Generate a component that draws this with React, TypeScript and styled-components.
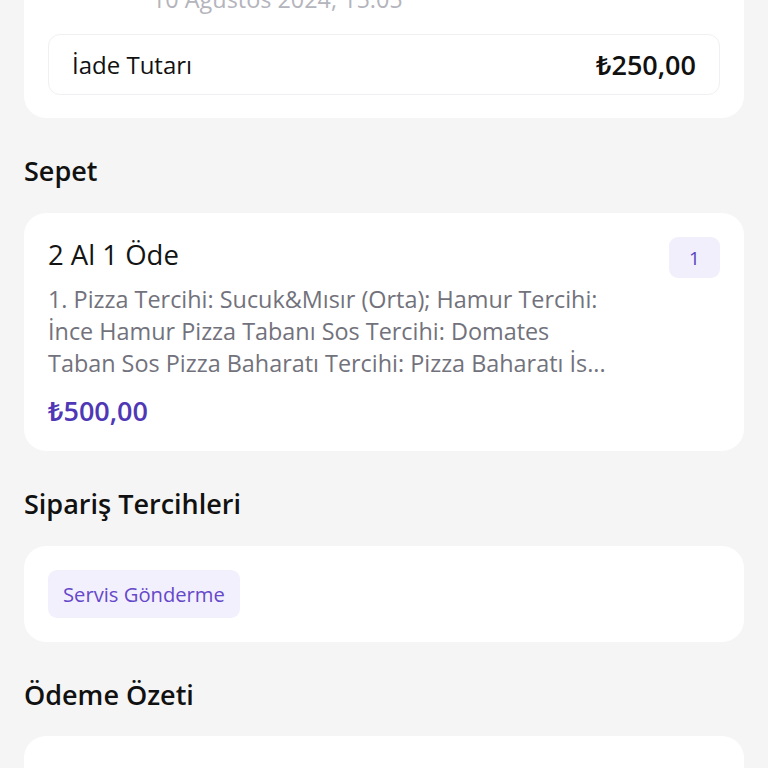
import React from "react";
import styled, { createGlobalStyle } from "styled-components";

const Global = createGlobalStyle`
  html, body { margin: 0; padding: 0; background: #f5f5f5; }
  body { font-family: "Open Sans", "Noto Sans", sans-serif; color: #141414; overflow: hidden; }
  * { box-sizing: border-box; }
`;

const Page = styled.div`
  margin-top: -40px;
  padding: 0 24px;
  display: flex;
  flex-direction: column;
`;

const Card = styled.div`
  background: #ffffff;
  border-radius: 22px;
  padding: 24px;
  display: flex;
  flex-direction: column;
`;

const TopCard = styled(Card)`
  padding-bottom: 23px;
`;

const DateRow = styled.div`
  height: 30px;
  line-height: 30px;
  padding-left: 104px;
  margin-bottom: 20px;
  font-size: 23.4px;
  color: #b4b4bc;
  white-space: nowrap;
`;

const RefundBox = styled.div`
  height: 61px;
  border: 1.5px solid #f0f0f2;
  border-radius: 12px;
  padding: 0 23px;
  display: flex;
  align-items: center;
  justify-content: space-between;
`;

const RefundLabel = styled.span`
  font-size: 24px;
  font-weight: 500;
  color: #111;
`;

const RefundValue = styled.span`
  font-size: 27px;
  font-weight: 600;
  color: #111;
`;

const SectionTitle = styled.h2`
  margin: 37px 0 26px;
  height: 32px;
  line-height: 32px;
  font-size: 27px;
  font-weight: 600;
  color: #111;
`;

const LastTitle = styled(SectionTitle)`
  margin-bottom: 25px;
`;

const ItemHead = styled.div`
  display: flex;
  justify-content: space-between;
  align-items: center;
  height: 41px;
`;

const ItemTitle = styled.span`
  font-size: 27.5px;
  line-height: 36px;
  margin-top: -5px;
  font-weight: 400;
  color: #141414;
`;

const QtyBadge = styled.span`
  width: 51px;
  height: 41px;
  border-radius: 9px;
  background: #f1effc;
  color: #5842c0;
  font-size: 19px;
  display: flex;
  align-items: center;
  justify-content: center;
`;

const ItemDesc = styled.p`
  margin: 5px 0 0;
  max-width: 562px;
  font-size: 23.4px;
  line-height: 32px;
  color: #72727c;
`;

const Price = styled.span`
  margin-top: 15px;
  line-height: 33px;
  font-size: 27px;
  font-weight: 600;
  color: #4f38b6;
`;

const ChipRow = styled.div`
  display: flex;
  gap: 10px;
`;

const Chip = styled.span`
  height: 48px;
  padding: 0 15px;
  border-radius: 9px;
  background: #f3f0fd;
  color: #6548c9;
  font-size: 20.2px;
  font-weight: 500;
  display: flex;
  align-items: center;
`;

const SummaryCard = styled(Card)`
  height: 120px;
`;

export default function App() {
  return (
    <>
      <Global />
      <Page>
        <TopCard>
          <DateRow>10 Ağustos 2024, 15:05</DateRow>
          <RefundBox>
            <RefundLabel>İade Tutarı</RefundLabel>
            <RefundValue>₺250,00</RefundValue>
          </RefundBox>
        </TopCard>

        <SectionTitle>Sepet</SectionTitle>
        <Card>
          <ItemHead>
            <ItemTitle>2 Al 1 Öde</ItemTitle>
            <QtyBadge>1</QtyBadge>
          </ItemHead>
          <ItemDesc>
            1. Pizza Tercihi: Sucuk&amp;Mısır (Orta); Hamur Tercihi: İnce Hamur Pizza Tabanı Sos Tercihi: Domates Taban Sos Pizza Baharatı Tercihi: Pizza Baharatı İs...
          </ItemDesc>
          <Price>₺500,00</Price>
        </Card>

        <SectionTitle>Sipariş Tercihleri</SectionTitle>
        <Card>
          <ChipRow>
            <Chip>Servis Gönderme</Chip>
          </ChipRow>
        </Card>

        <LastTitle>Ödeme Özeti</LastTitle>
        <SummaryCard />
      </Page>
    </>
  );
}
